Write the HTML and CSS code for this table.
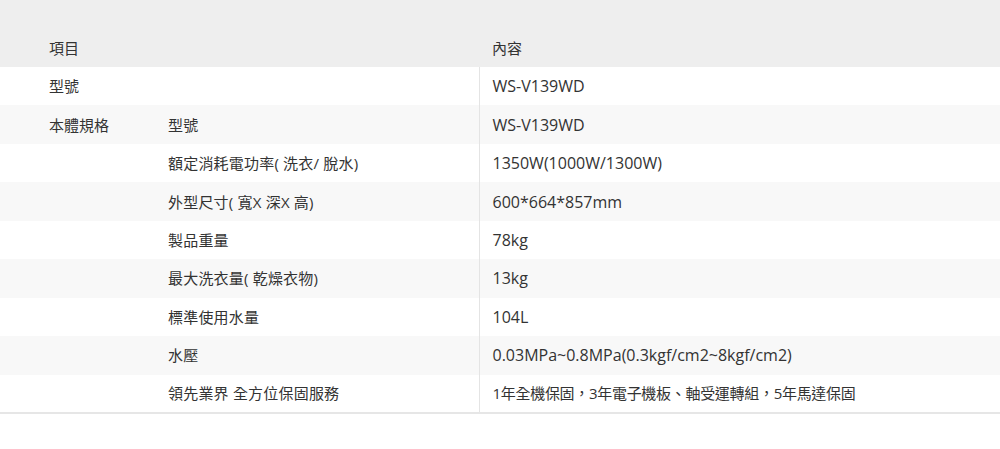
FILE: index.html
```html
<!DOCTYPE html>
<html lang="zh-Hant">
<head>
<meta charset="utf-8">
<link rel="stylesheet" href="styles.css">
</head>
<body>
<table class="spec">
  <colgroup>
    <col class="w1">
    <col class="w2">
    <col class="w3">
  </colgroup>
  <thead>
    <tr><th colspan="2" class="c1">項目</th><th class="c3">內容</th></tr>
  </thead>
  <tbody>
    <tr><td class="c1">型號</td><td class="c2"></td><td class="c3">WS-V139WD</td></tr>
    <tr class="alt"><td class="c1">本體規格</td><td class="c2">型號</td><td class="c3">WS-V139WD</td></tr>
    <tr><td class="c1"></td><td class="c2">額定消耗電功率( 洗衣/ 脫水)</td><td class="c3">1350W(1000W/1300W)</td></tr>
    <tr class="alt"><td class="c1"></td><td class="c2">外型尺寸( 寬X 深X 高)</td><td class="c3">600*664*857mm</td></tr>
    <tr><td class="c1"></td><td class="c2">製品重量</td><td class="c3">78kg</td></tr>
    <tr class="alt"><td class="c1"></td><td class="c2">最大洗衣量( 乾燥衣物)</td><td class="c3">13kg</td></tr>
    <tr><td class="c1"></td><td class="c2">標準使用水量</td><td class="c3">104L</td></tr>
    <tr class="alt"><td class="c1"></td><td class="c2">水壓</td><td class="c3">0.03MPa~0.8MPa(0.3kgf/cm2~8kgf/cm2)</td></tr>
    <tr><td class="c1"></td><td class="c2">領先業界 全方位保固服務</td><td class="c3 mix">1年全機保固，3年電子機板、軸受運轉組，5年馬達保固</td></tr>
  </tbody>
</table>
</body>
</html>
```
FILE: styles.css
```css
html, body {
  margin: 0;
  padding: 0;
  background: #fff;
}
body {
  font-family: "Open Sans", "Noto Sans CJK TC", sans-serif;
  font-size: 15px;
  color: #333;
}
.spec {
  width: 1000px;
  border-collapse: collapse;
  table-layout: fixed;
  border-bottom: 2px solid #e6e6e6;
}
.spec .w1 { width: 152px; }
.spec .w2 { width: 327px; }
.spec .w3 { width: auto; }
.spec th {
  background: #eeeeee;
  height: 67px;
  box-sizing: border-box;
  padding: 0 0 9px 0;
  vertical-align: bottom;
  font-weight: normal;
  text-align: left;
  line-height: 20px;
}
.spec td {
  height: 38.44px;
  box-sizing: border-box;
  padding: 0;
  vertical-align: middle;
  line-height: 20px;
  text-align: left;
  white-space: nowrap;
  overflow: hidden;
}
.spec tr.alt td {
  background: #f8f8f8;
}
.spec .c1 {
  padding-left: 49px;
}
.spec .c2 {
  padding-left: 16px;
  letter-spacing: 0.2px;
}
.spec th.c3 {
  padding-left: 13px;
}
.spec td.c3 {
  padding-left: 13px;
  border-left: 1px solid #e4e4e4;
  font-size: 16px;
}
.spec td.c3.mix {
  font-size: 15px;
  letter-spacing: -0.3px;
}
```
